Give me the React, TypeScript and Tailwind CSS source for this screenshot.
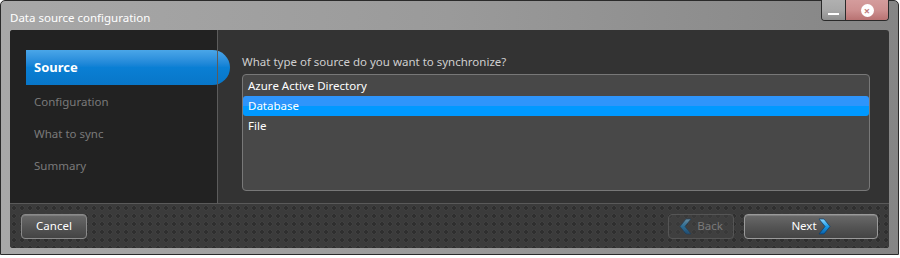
import React, { useState } from 'react';

const sources = ['Azure Active Directory', 'Database', 'File'];
const steps = ['Configuration', 'What to sync', 'Summary'];

const Chevron: React.FC<{ dir: 'left' | 'right'; dim?: boolean }> = ({ dir, dim }) => (
  <svg width="13" height="17" viewBox="0 0 13 17" className={dim ? 'opacity-50' : ''}>
    <defs>
      <linearGradient id={`chev-${dir}`} x1="0" y1="0" x2="0" y2="1">
        <stop offset="0" stopColor="#8fd8ff" />
        <stop offset="0.5" stopColor="#1a9be8" />
        <stop offset="1" stopColor="#0a5fa8" />
      </linearGradient>
    </defs>
    {dir === 'right' ? (
      <polygon points="1,1 6,1 12,8.5 6,16 1,16 7,8.5" fill={`url(#chev-${dir})`} stroke="#0a3d6b" strokeWidth="0.7" />
    ) : (
      <polygon points="12,1 7,1 1,8.5 7,16 12,16 6,8.5" fill={`url(#chev-${dir})`} stroke="#0a3d6b" strokeWidth="0.7" />
    )}
  </svg>
);

const App: React.FC = () => {
  const [selected, setSelected] = useState('Database');

  return (
    <div
      className="w-[900px] h-[258px] bg-white"
      style={{ fontFamily: '"Noto Sans", "Open Sans", sans-serif' }}
    >
      <div className="relative w-[899px] h-[255px] rounded-t-[5px] border border-[#2a2a2a] bg-gradient-to-r from-[#a8a8a8] via-[#9a9a9a] to-[#858585] flex flex-col">
        {/* title bar */}
        <div className="h-[29px] pl-[9px] pt-[9px] text-[11.5px] leading-[16px] text-white">
          Data source configuration
        </div>

        {/* window buttons */}
        <div className="absolute top-[-1px] right-[9px] flex h-[21px] rounded-b-[4px] border border-t-0 border-[#2a2a2a] overflow-hidden">
          <div className="w-[24px] flex items-end justify-center pb-[5px] bg-gradient-to-b from-[#b0b0b0] via-[#a8a8a8] to-[#8e8e8e] border-r border-[#2a2a2a]">
            <div className="w-[11px] h-[2px] bg-white" />
          </div>
          <div className="w-[42px] flex items-center justify-center bg-gradient-to-b from-[#d49c9c] via-[#cd9090] to-[#b87272]">
            <div className="w-[13px] h-[13px] rounded-full bg-white flex items-center justify-center text-[#c07f7f] text-[11px] leading-none font-bold">
              ×
            </div>
          </div>
        </div>

        {/* dialog body */}
        <div className="mx-[9px] h-[218px] rounded-[3px] overflow-hidden flex flex-col bg-[#333333]">
          <div className="h-[173px] flex">
            <div className="w-[207px] bg-[#222222] pt-[20px] shrink-0">
              <div className="relative w-[204px] h-[35px] ml-[16px] rounded-r-full bg-gradient-to-b from-[#4aa6e8] via-[#0a7fd4] to-[#0876c8] flex items-center pl-[8px] text-[13px] font-bold text-white z-0">
                Source
              </div>
              <div className="flex flex-col pl-[24px] pt-[7px] gap-[12px]">
                {steps.map(s => (
                  <div key={s} className="text-[11.5px] leading-[20px] text-[#7a7a7a]">{s}</div>
                ))}
              </div>
            </div>
            <div className="w-px bg-[#5c5c5c] relative z-10" />
            <div className="flex-1 pl-[24px] pr-[19px] pt-[24px]">
              <div className="text-[11.5px] leading-[16px] text-[#cfcfcf] mb-[4px]">
                What type of source do you want to synchronize?
              </div>
              <div className="h-[117px] rounded-[4px] border border-[#787878] bg-[#484848] pt-[1px]">
                {sources.map(s => (
                  <div
                    key={s}
                    onClick={() => setSelected(s)}
                    className={`h-[20px] px-[5px] flex items-center text-[11.5px] text-white rounded-[3px] ${
                      selected === s ? 'bg-[linear-gradient(#2e95fb_0%,#2e95fb_48%,#0099ff_52%,#0099ff_100%)]' : ''
                    }`}
                  >
                    {s}
                  </div>
                ))}
              </div>
            </div>
          </div>

          {/* footer */}
          <div className="flex-1 border-t border-[#5a5a5a] bg-[#3b3b3b] bg-[radial-gradient(circle,#2f2f2f_1.6px,#444444_2.2px,transparent_2.8px)] bg-[length:8px_8px] flex items-center justify-between px-[11px]">
            <button className="w-[66px] h-[25px] rounded-[4px] border border-[#8a8a8a] bg-gradient-to-b from-[#6a6a6a] via-[#555555] to-[#444444] text-[11.5px] text-white shadow-[inset_0_1px_0_rgba(255,255,255,0.15)]">
              Cancel
            </button>
            <div className="flex gap-[10px]">
              <button className="w-[66px] h-[25px] rounded-[4px] border border-[#555555] bg-[#444444]/50 text-[11.5px] text-[#7a7a7a] flex items-center justify-center gap-[5px]">
                <Chevron dir="left" dim />
                Back
              </button>
              <button className="w-[134px] h-[25px] rounded-[4px] border border-[#9a9a9a] bg-gradient-to-b from-[#6a6a6a] via-[#555555] to-[#444444] text-[11.5px] text-white flex items-center justify-center gap-[1px] shadow-[inset_0_1px_0_rgba(255,255,255,0.15)]">
                Next
                <Chevron dir="right" />
              </button>
            </div>
          </div>
        </div>
      </div>
    </div>
  );
};

export default App;
